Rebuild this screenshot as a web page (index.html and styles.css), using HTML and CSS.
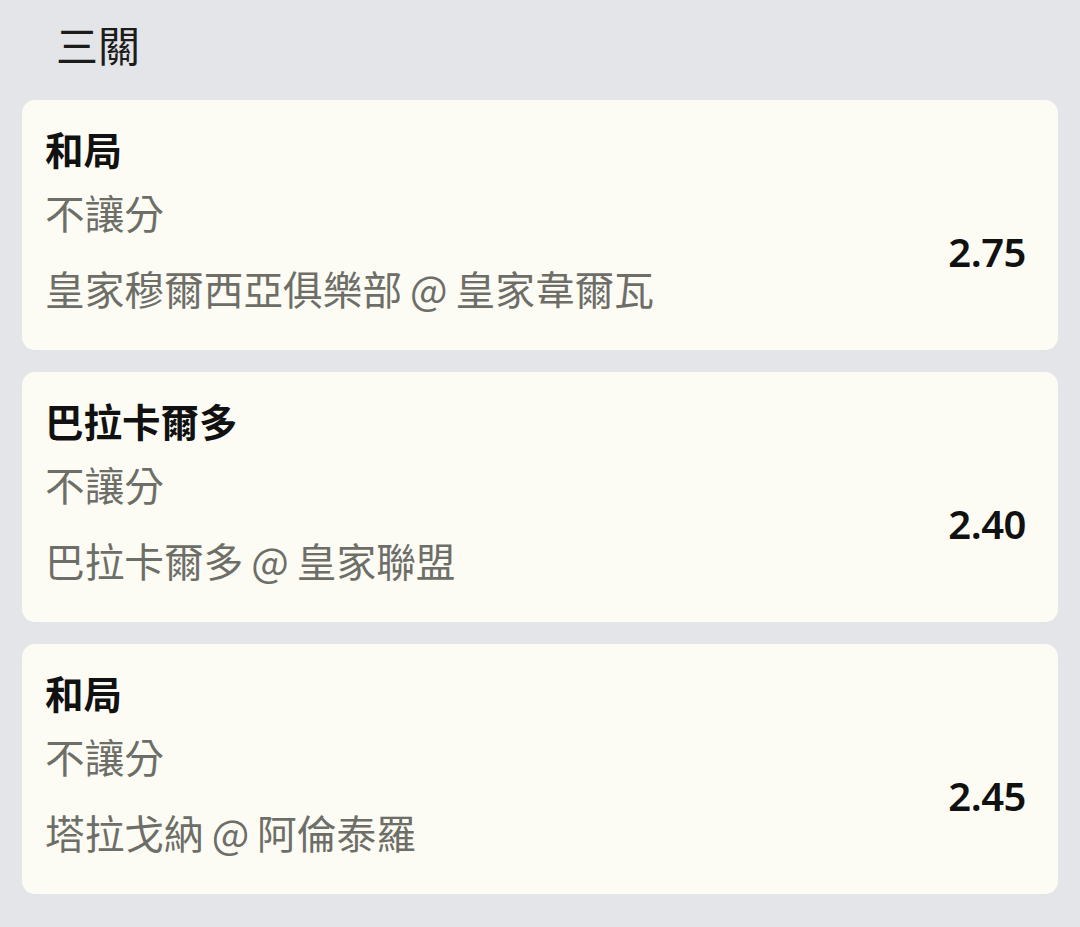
FILE: index.html
```html
<!DOCTYPE html>
<html lang="zh-Hant">
<head>
    <meta charset="UTF-8">
    <meta name="viewport" content="width=device-width, initial-scale=1.0">
    <title>三關</title>
    <link rel="stylesheet" href="styles.css">
</head>
<body>
    <div class="page">
        <h1 class="heading">三關</h1>
        <div class="list">
            <div class="card">
                <div class="pick">和局</div>
                <div class="row">
                    <div class="info">
                        <div class="sub">不讓分</div>
                        <div class="sub">皇家穆爾西亞俱樂部 @ 皇家韋爾瓦</div>
                    </div>
                    <div class="odds">2.75</div>
                </div>
            </div>
            <div class="card">
                <div class="pick">巴拉卡爾多</div>
                <div class="row">
                    <div class="info">
                        <div class="sub">不讓分</div>
                        <div class="sub">巴拉卡爾多 @ 皇家聯盟</div>
                    </div>
                    <div class="odds">2.40</div>
                </div>
            </div>
            <div class="card">
                <div class="pick">和局</div>
                <div class="row">
                    <div class="info">
                        <div class="sub">不讓分</div>
                        <div class="sub">塔拉戈納 @ 阿倫泰羅</div>
                    </div>
                    <div class="odds">2.45</div>
                </div>
            </div>
        </div>
    </div>
</body>
</html>
```

FILE: styles.css
```css
body {
    margin: 0;
    background-color: #e4e5e9;
    font-family: "Noto Sans CJK TC", "Noto Sans", sans-serif;
    color: #141414;
}
.page {
    padding: 16px 22px 0;
}
.heading {
    margin: 0 0 28px;
    padding-left: 34px;
    font-size: 42px;
    font-weight: 400;
    line-height: 56px;
    color: #1c1c1c;
}
.list {
    display: flex;
    flex-direction: column;
    gap: 22px;
}
.card {
    height: 250px;
    box-sizing: border-box;
    padding: 22px 32px 24px 23px;
    background-color: #fcfcf4;
    border-radius: 13px;
}
.pick {
    font-size: 38.5px;
    font-weight: 700;
    line-height: 52px;
    color: #111;
}
.row {
    display: flex;
    align-items: center;
    justify-content: space-between;
}
.sub {
    font-size: 39.7px;
    line-height: 76px;
    word-spacing: -1px;
    color: #6e6e69;
}
.odds {
    font-family: "Noto Sans", sans-serif;
    font-size: 40px;
    font-weight: 600;
    color: #111;
    letter-spacing: -0.5px;
    margin-top: 2px;
}
```
